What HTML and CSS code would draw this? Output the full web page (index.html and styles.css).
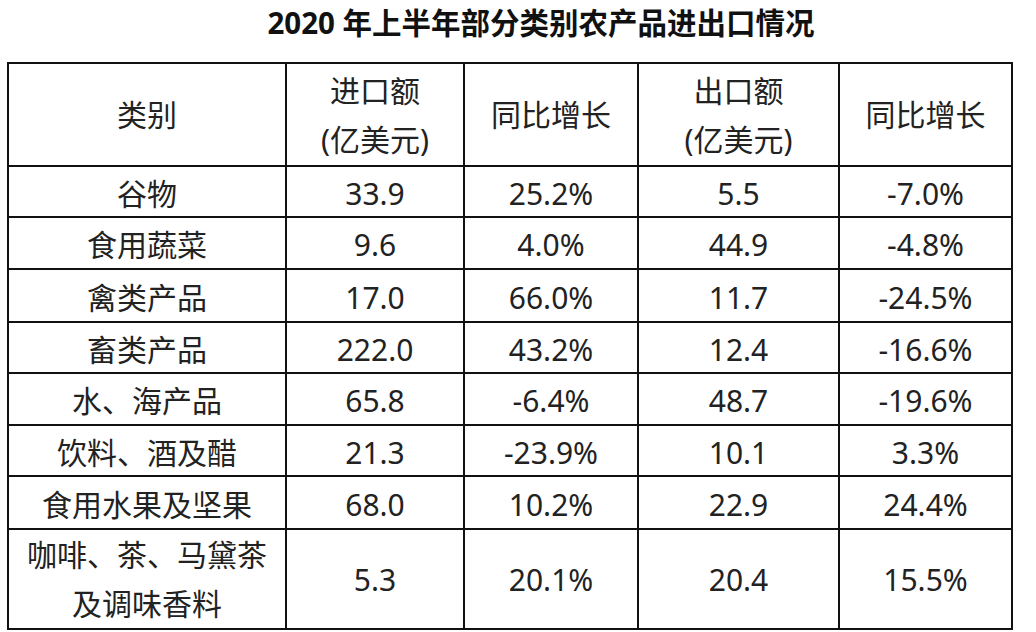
FILE: index.html
```html
<!DOCTYPE html>
<html lang="zh-CN">
<head>
<meta charset="utf-8">
<title>2020 年上半年部分类别农产品进出口情况</title>
<link rel="stylesheet" href="styles.css">
</head>
<body>
<h1 class="title">2020 年上半年部分类别农产品进出口情况</h1>
<table class="data">
  <colgroup>
    <col class="c1"><col class="c2"><col class="c3"><col class="c4"><col class="c5">
  </colgroup>
  <thead>
    <tr class="head">
      <th>类别</th>
      <th>进口额<br>(亿美元)</th>
      <th>同比增长</th>
      <th>出口额<br>(亿美元)</th>
      <th>同比增长</th>
    </tr>
  </thead>
  <tbody>
    <tr class="r short"><td>谷物</td><td>33.9</td><td>25.2%</td><td>5.5</td><td>-7.0%</td></tr>
    <tr class="r"><td>食用蔬菜</td><td>9.6</td><td>4.0%</td><td>44.9</td><td>-4.8%</td></tr>
    <tr class="r tall"><td>禽类产品</td><td>17.0</td><td>66.0%</td><td>11.7</td><td>-24.5%</td></tr>
    <tr class="r short"><td>畜类产品</td><td>222.0</td><td>43.2%</td><td>12.4</td><td>-16.6%</td></tr>
    <tr class="r"><td>水、海产品</td><td>65.8</td><td>-6.4%</td><td>48.7</td><td>-19.6%</td></tr>
    <tr class="r short"><td>饮料、酒及醋</td><td>21.3</td><td>-23.9%</td><td>10.1</td><td>3.3%</td></tr>
    <tr class="r tall"><td>食用水果及坚果</td><td>68.0</td><td>10.2%</td><td>22.9</td><td>24.4%</td></tr>
    <tr class="last"><td>咖啡、茶、马黛茶<br>及调味香料</td><td>5.3</td><td>20.1%</td><td>20.4</td><td>15.5%</td></tr>
  </tbody>
</table>
</body>
</html>
```

FILE: styles.css
```css
html, body {
  margin: 0;
  padding: 0;
  background: #ffffff;
}

body {
  font-family: "Noto Sans", "Noto Sans CJK SC", sans-serif;
  color: #222222;
}

.title {
  margin: 0;
  height: 62px;
  box-sizing: border-box;
  padding: 3px 0 0 46px;
  text-align: center;
  font-size: 29.5px;
  line-height: 40px;
  font-weight: 700;
  color: #111111;
}

.data {
  margin-left: 7px;
  width: 1006px;
  border-collapse: collapse;
  table-layout: fixed;
  font-size: 30px;
}

.c1 { width: 278px; }
.c2 { width: 178px; }
.c3 { width: 174px; }
.c4 { width: 201px; }
.c5 { width: 173px; }

.data th,
.data td {
  border: 2px solid #111111;
  padding: 4px 0 0;
  text-align: center;
  vertical-align: middle;
  font-weight: 400;
  line-height: 42px;
}

.head th,
.last td {
  padding: 0;
  line-height: 49px;
}

.head { height: 103px; }
.r { height: 52px; }
.r.tall { height: 53px; }
.r.short { height: 51px; }
.last { height: 100px; }
```
